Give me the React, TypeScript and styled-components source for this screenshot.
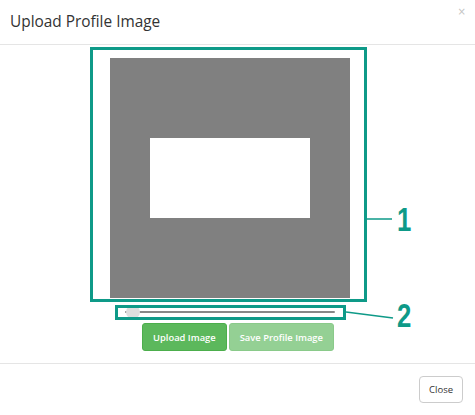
import React from "react";
import styled, { createGlobalStyle } from "styled-components";

const Global = createGlobalStyle`
  html, body { margin: 0; padding: 0; background: #fff; }
  body { font-family: "Open Sans", "Noto Sans", sans-serif; color: #333; }
`;

const Modal = styled.div`
  position: relative;
  width: 475px;
  height: 415px;
  background: #fff;
  display: flex;
  flex-direction: column;
`;

const Header = styled.div`
  height: 45px;
  box-sizing: border-box;
  border-bottom: 1px solid #e5e5e5;
  display: flex;
  align-items: center;
  padding: 0 10px;
  position: relative;
`;

const Title = styled.h4`
  margin: 0;
  font-size: 15.4px;
  font-weight: 400;
  color: #333;
  line-height: 1;
  padding-bottom: 1px;
`;

const CloseX = styled.span`
  position: absolute;
  right: 9px;
  top: 6px;
  font-size: 10px;
  color: #c4c4c4;
  font-family: "DejaVu Sans", sans-serif;
`;

const Body = styled.div`
  padding: 13px 0 12px;
  display: flex;
  flex-direction: column;
  border-bottom: 1px solid #e5e5e5;
`;

const Cropper = styled.div`
  width: 240px;
  height: 240px;
  margin-left: 110px;
  background: #808080;
  display: flex;
  align-items: center;
  justify-content: center;
`;

const Viewport = styled.div`
  width: 160px;
  height: 80px;
  background: #fff;
`;

const SliderRow = styled.div`
  position: relative;
  width: 210px;
  height: 14px;
  margin: 7px 0 0 125px;
  display: flex;
  align-items: center;
`;

const Track = styled.div`
  width: 100%;
  height: 2px;
  background: #888;
  border-radius: 1px;
`;

const Thumb = styled.div`
  position: absolute;
  left: 1px;
  top: 0;
  width: 14px;
  height: 14px;
  border-radius: 50%;
  background: #dedede;
`;

const Buttons = styled.div`
  display: flex;
  justify-content: center;
  gap: 2px;
  margin-top: 4px;
  padding-left: 1px;
`;

const GreenButton = styled.button<{ $disabled?: boolean }>`
  height: 28px;
  padding: 0 10px;
  border: 1px solid #4cae4c;
  border-radius: 3px;
  background: #5cb85c;
  color: #fff;
  font-family: "Open Sans", sans-serif;
  font-size: 9.4px;
  font-weight: 600;
  opacity: ${(p) => (p.$disabled ? 0.65 : 1)};
  cursor: pointer;
`;

const Footer = styled.div`
  flex: 1;
  display: flex;
  justify-content: flex-end;
  align-items: flex-start;
  padding: 12px 12px 0 0;
`;

const DefaultButton = styled.button`
  height: 27px;
  padding: 0 9px;
  border: 1px solid #ccc;
  border-radius: 4px;
  background: #fff;
  color: #333;
  font-family: "Open Sans", sans-serif;
  font-size: 9.5px;
`;

const teal = "#0e9a88";

const Frame = styled.div<{ $l: number; $t: number; $w: number; $h: number }>`
  position: absolute;
  left: ${(p) => p.$l}px;
  top: ${(p) => p.$t}px;
  width: ${(p) => p.$w}px;
  height: ${(p) => p.$h}px;
  box-sizing: border-box;
  border: 3px solid ${teal};
  pointer-events: none;
`;

const Leader = styled.svg`
  position: absolute;
  left: 0;
  top: 0;
  pointer-events: none;
`;

const Num = styled.span<{ $l: number; $t: number }>`
  position: absolute;
  left: ${(p) => p.$l}px;
  top: ${(p) => p.$t}px;
  font-family: "Liberation Sans", sans-serif;
  font-weight: 700;
  font-size: 33px;
  line-height: 1;
  color: ${teal};
  transform: scaleX(0.78);
  transform-origin: left top;
`;

export default function App() {
  return (
    <>
      <Global />
      <Modal>
        <Header>
          <Title>Upload Profile Image</Title>
          <CloseX>×</CloseX>
        </Header>
        <Body>
          <Cropper>
            <Viewport />
          </Cropper>
          <SliderRow>
            <Track />
            <Thumb />
          </SliderRow>
          <Buttons>
            <GreenButton>Upload Image</GreenButton>
            <GreenButton $disabled>Save Profile Image</GreenButton>
          </Buttons>
        </Body>
        <Footer>
          <DefaultButton>Close</DefaultButton>
        </Footer>

        <Frame $l={90} $t={47} $w={277} $h={255} />
        <Frame $l={115} $t={305} $w={231} $h={15} />
        <Leader width="475" height="415">
          <line x1="367" y1="219" x2="392" y2="219" stroke={teal} strokeWidth="1.5" />
          <line x1="346" y1="312" x2="393" y2="318" stroke={teal} strokeWidth="1.5" />
        </Leader>
        <Num $l={397} $t={203}>1</Num>
        <Num $l={397} $t={299}>2</Num>
      </Modal>
    </>
  );
}
